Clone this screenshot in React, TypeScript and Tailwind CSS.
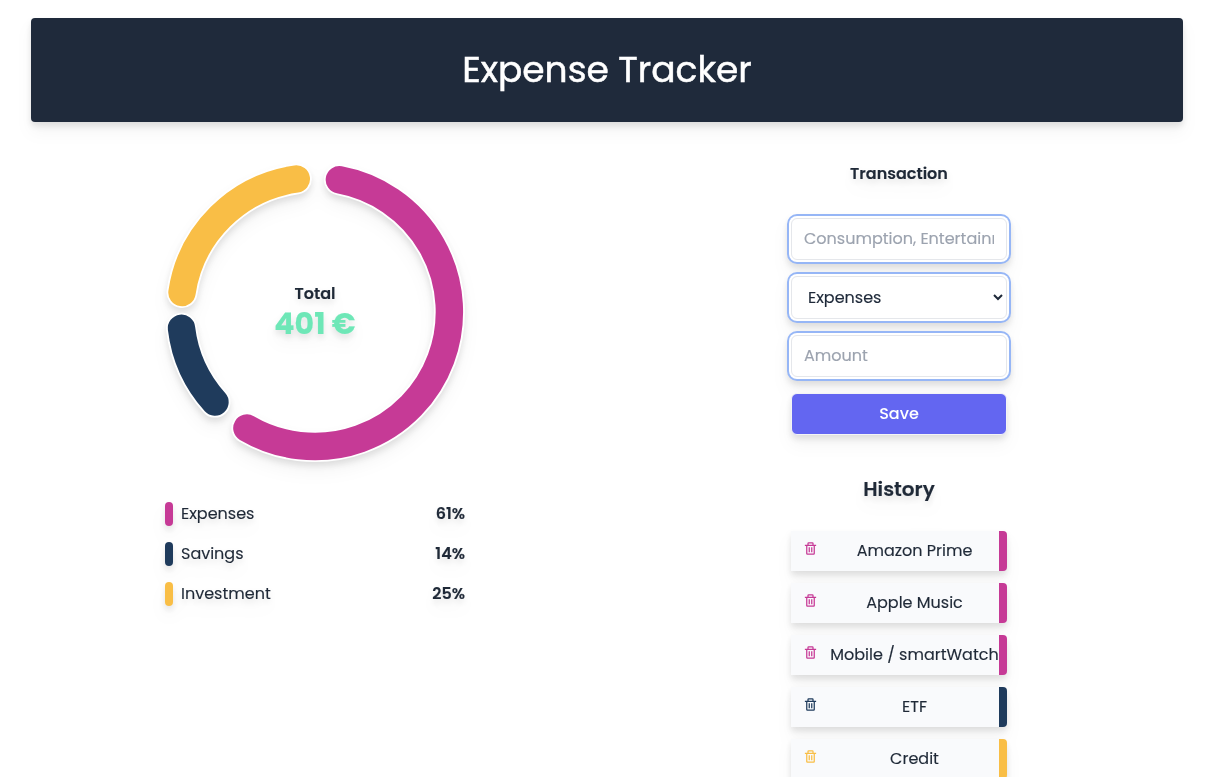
import { BiTrash } from "react-icons/bi";

const RADIUS = 134.5;

const arcs = [
  { color: "#c63a96", from: [339.4, 179.8], to: [246.9, 428.1], large: 1 },
  { color: "#1f3b5c", from: [215, 402.1], to: [181.5, 328.3], large: 0 },
  { color: "#f9be46", from: [182, 292.5], to: [296.3, 179], large: 0 },
];

const labels = [
  { name: "Expenses", percent: "61%", bar: "bg-[#c63a96]" },
  { name: "Savings", percent: "14%", bar: "bg-[#1f3b5c]" },
  { name: "Investment", percent: "25%", bar: "bg-[#f9be46]" },
];

const history = [
  { name: "Amazon Prime", border: "border-[#c63a96]", text: "text-[#c63a96]" },
  { name: "Apple Music", border: "border-[#c63a96]", text: "text-[#c63a96]" },
  { name: "Mobile / smartWatch", border: "border-[#c63a96]", text: "text-[#c63a96]" },
  { name: "ETF", border: "border-[#1f3b5c]", text: "text-[#1f3b5c]" },
  { name: "Credit", border: "border-[#f9be46]", text: "text-[#f9be46]" },
];

const field =
  "block w-full rounded-md border border-gray-200 bg-white text-base text-gray-800 outline-none shadow-[0_0_0_2px_#fff,0_0_0_4px_#96b6f6] placeholder:text-[#9ca3af]";

function Chart() {
  return (
    <div className="grid h-[300px] w-[300px]">
      <svg viewBox="165 162 300 300" className="col-start-1 row-start-1 h-[300px] w-[300px] overflow-visible" fill="none" strokeLinecap="round">
        {arcs.map((a) => {
          const d = `M${a.from.join(" ")}A${RADIUS} ${RADIUS} 0 ${a.large} 1 ${a.to.join(" ")}`;
          return (
            <g key={a.color}>
              <path d={d} stroke="#fff" strokeWidth="31" />
              <path d={d} stroke={a.color} strokeWidth="27.4" />
            </g>
          );
        })}
      </svg>
      <h3 className="z-10 col-start-1 row-start-1 flex flex-col items-center justify-self-center pt-[120px] font-semibold">
        Total
        <span className="text-3xl font-bold text-[#6ee7b7]">401 €</span>
      </h3>
    </div>
  );
}

function Labels() {
  return (
    <div className="flex flex-col gap-4">
      {labels.map((l) => (
        <div key={l.name} className="flex h-6 items-center justify-between">
          <div className="flex items-center gap-2">
            <div className={`h-6 w-2 rounded-[4px] ${l.bar}`} />
            <span>{l.name}</span>
          </div>
          <span className="font-semibold">{l.percent}</span>
        </div>
      ))}
    </div>
  );
}

function TransactionForm() {
  return (
    <form className="flex w-[216px] flex-col">
      <input className={`${field} h-[42px] px-3 pb-0.5`} placeholder="Consumption, Entertainment" />
      <select className={`${field} mt-4 h-[43px] px-3`} defaultValue="Expenses">
        <option>Expenses</option>
        <option>Savings</option>
        <option>Investment</option>
      </select>
      <input className={`${field} mt-4 h-[42px] px-3 pb-0.5`} placeholder="Amount" />
      <button type="button" className="mt-4 h-[42px] w-full rounded-md border border-gray-100 bg-[#6366f1] font-medium text-white [-webkit-text-stroke:0]">
        Save
      </button>
    </form>
  );
}

function History() {
  return (
    <div className="flex w-[216px] flex-col gap-3">
      {history.map((h) => (
        <div key={h.name} className={`flex h-10 rounded-r border-r-8 bg-[#f9fafc] ${h.border}`}>
          <button type="button" className={`shrink-0 self-start px-3 pt-[10px] ${h.text}`}>
            <BiTrash size={15} />
          </button>
          <span className="flex-1 pt-2 text-center leading-6 whitespace-nowrap">{h.name}</span>
        </div>
      ))}
    </div>
  );
}

export default function App() {
  return (
    <div className="h-[777px] w-full overflow-hidden bg-white pl-[31px] font-['Poppins','Inter',sans-serif] text-base">
      <div className="w-[1152px] pt-[18px] text-center text-[#1f2937] [-webkit-text-stroke:0.15px] [filter:drop-shadow(0_10px_8px_rgb(0_0_0/0.04))_drop-shadow(0_4px_3px_rgb(0_0_0/0.1))]">
        <h1 className="mb-10 rounded bg-[#1f2a3b] py-8 text-4xl text-white [-webkit-text-stroke:0.5px]">Expense Tracker</h1>
        <div className="grid grid-cols-2 gap-4">
          <div className="flex flex-col items-center">
            <Chart />
            <div className="w-[300px] pt-10">
              <Labels />
            </div>
          </div>
          <div className="flex flex-col items-center">
            <h2 className="mb-8 font-semibold">Transaction</h2>
            <TransactionForm />
            <h2 className="mt-10 mb-7 text-xl font-semibold">History</h2>
            <History />
          </div>
        </div>
      </div>
    </div>
  );
}
